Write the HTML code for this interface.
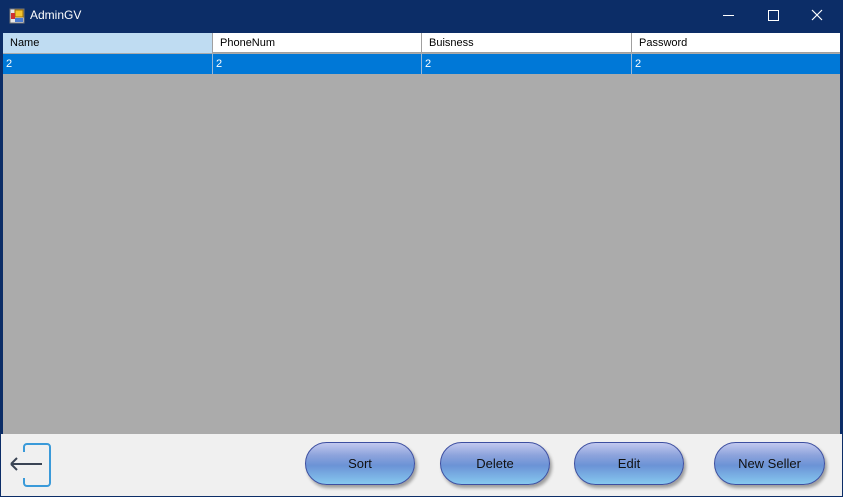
<!DOCTYPE html>
<html><head><style>
*{margin:0;padding:0;box-sizing:border-box}
body{width:843px;height:497px;background:#0c2d67;position:relative;overflow:hidden;font-family:"Segoe UI","Liberation Sans",sans-serif}
.t{position:absolute;left:30px;top:8px;color:#fff;font-size:12px}
.grid{position:absolute;left:3px;top:33px;width:837px;height:401px;background:#ababab}
.hdr,.row{position:absolute;left:0;width:837px;height:20px;font-size:11px}
.hdr{top:0;background:#fff;border-bottom:1px solid #a0a0a0}
.row{top:21px;background:#0078d7;color:#fff}
.c{position:absolute;top:0;height:20px;line-height:20px;padding-left:7px;border-right:1px solid #a0a0a0}
.row .c{padding-left:3px;border-right:1px solid #9bb8d8}
.bot{position:absolute;left:1px;top:434px;width:841px;height:62px;background:#f0f0f0}
.b{position:absolute;top:8px;width:110px;height:43px;border-radius:22px;border:1px solid #3d4fa0;background:linear-gradient(#c2c8ef 0%,#8da3dc 30%,#6b93d6 55%,#86c8ef 100%);box-shadow:2px 3px 3px rgba(0,0,0,.35);font-size:13px;color:#111;text-align:center;line-height:42px}
</style></head><body>
<svg style="position:absolute;left:9px;top:8px" width="16" height="16"><rect x="1" y="1" width="14" height="14" fill="#e8e8e8" stroke="#777"/><rect x="6" y="2" width="8" height="7" fill="#f4c430" stroke="#a07000"/><rect x="2" y="5" width="4" height="6" fill="#d03030"/><rect x="6" y="10" width="8" height="4" fill="#4a7ad0"/></svg>
<div class="t">AdminGV</div>
<svg style="position:absolute;left:720px;top:8px" width="110" height="16"><line x1="3" y1="7.5" x2="14" y2="7.5" stroke="#fff"/><rect x="48.5" y="2.5" width="10" height="10" fill="none" stroke="#fff"/><path d="M92 2L102 12M102 2L92 12" stroke="#fff" stroke-width="1.2"/></svg>
<div class="grid">
<div class="hdr"><div class="c" style="left:0;width:210px;background:#bfdcf2">Name</div><div class="c" style="left:210px;width:209px">PhoneNum</div><div class="c" style="left:419px;width:210px">Buisness</div><div class="c" style="left:629px;width:208px;border:0">Password</div></div>
<div class="row"><div class="c" style="left:0;width:210px">2</div><div class="c" style="left:210px;width:209px">2</div><div class="c" style="left:419px;width:210px">2</div><div class="c" style="left:629px;width:208px;border:0">2</div></div>
</div>
<div class="bot">
<svg style="position:absolute;left:7px;top:8px" width="46" height="46"><rect x="16" y="2" width="26" height="42" rx="3" fill="none" stroke="#3a9ad9" stroke-width="2"/><rect x="12" y="10" width="6" height="26" fill="#f0f0f0"/><path d="M3 22H34M3 22L9 16M3 22L9 28" fill="none" stroke="#3a4454" stroke-width="2"/></svg>
<div class="b" style="left:304px">Sort</div>
<div class="b" style="left:439px">Delete</div>
<div class="b" style="left:573px">Edit</div>
<div class="b" style="left:713px;width:111px">New Seller</div>
</div>
</body></html>
